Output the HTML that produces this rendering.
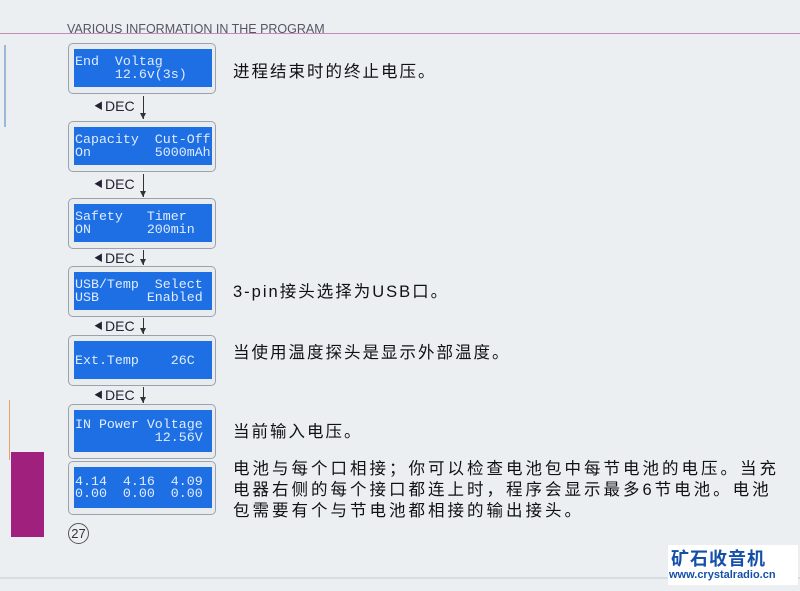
<!DOCTYPE html><html><head><meta charset="utf-8"><style>
body{margin:0;width:800px;height:591px;background:#eceff2;position:relative;overflow:hidden;font-family:"Liberation Sans","Noto Sans CJK SC",sans-serif}
.a{position:absolute}
.box{position:absolute;left:68px;width:146px;height:49px;border:1px solid #9aa3ad;border-radius:5px;background:#e8ecef}
.lcd{position:absolute;left:5px;top:5px;right:3px;bottom:6px;background:#1d6fe3;color:#e0ecff;font:13.3px/13px "Liberation Mono",monospace;padding:3px 1px;white-space:pre;overflow:hidden;box-sizing:border-box;display:flex;flex-direction:column;justify-content:center}
.dec{position:absolute;left:94px;font-size:14px;color:#223}
.dec:before{content:"◀";font-size:9px;margin-right:2px;vertical-align:2px}
.arr{position:absolute;left:143px;width:1px;background:#333}
.arr:after{content:"";position:absolute;left:-3px;bottom:0;border:3.5px solid transparent;border-top:6px solid #333;border-bottom:0}
.t{position:absolute;left:233px;font-size:16.5px;color:#111;line-height:21px;letter-spacing:2px}
</style></head><body>
<div class="a" style="left:0;top:33px;width:800px;height:1px;background:#c58ab8"></div>
<div class="a" style="left:67px;top:22px;font-size:12.5px;color:#556">VARIOUS INFORMATION IN THE PROGRAM</div>
<div class="a" style="left:4px;top:45px;width:2px;height:82px;background:#9ab8d8"></div>
<div class="a" style="left:9px;top:400px;width:1px;height:60px;background:#e8a070"></div>
<div class="a" style="left:11px;top:452px;width:33px;height:85px;background:#a0207e"></div>
<div class="a" style="left:0;top:577px;width:800px;height:2px;background:#d6dce2"></div>

<div class="box" style="top:43px"><div class="lcd">End  Voltag
     12.6v(3s)</div></div>
<div class="dec" style="top:98px">DEC</div><div class="arr" style="top:96px;height:23px"></div>
<div class="box" style="top:121px"><div class="lcd">Capacity  Cut-Off
On        5000mAh</div></div>
<div class="dec" style="top:176px">DEC</div><div class="arr" style="top:174px;height:23px"></div>
<div class="box" style="top:198px"><div class="lcd">Safety   Timer
ON       200min</div></div>
<div class="dec" style="top:250px">DEC</div><div class="arr" style="top:250px;height:15px"></div>
<div class="box" style="top:266px"><div class="lcd">USB/Temp  Select
USB      Enabled</div></div>
<div class="dec" style="top:318px">DEC</div><div class="arr" style="top:318px;height:16px"></div>
<div class="box" style="top:335px"><div class="lcd">Ext.Temp    26C</div></div>
<div class="dec" style="top:387px">DEC</div><div class="arr" style="top:387px;height:16px"></div>
<div class="box" style="top:404px;height:53px"><div class="lcd">IN Power Voltage
          12.56V</div></div>
<div class="box" style="top:461px;height:52px"><div class="lcd" style="line-height:12px">4.14  4.16  4.09
0.00  0.00  0.00</div></div>
<div class="a" style="left:68px;top:523px;width:19px;height:19px;border:1px solid #555;border-radius:50%;font-size:13px;text-align:center;line-height:19px;color:#333">27</div>

<div class="t" style="top:62px">进程结束时的终止电压。</div>
<div class="t" style="top:282px">3-pin接头选择为USB口。</div>
<div class="t" style="top:343px">当使用温度探头是显示外部温度。</div>
<div class="t" style="top:422px">当前输入电压。</div>
<div class="t" style="top:459px;letter-spacing:3px;white-space:nowrap">电池与每个口相接；你可以检查电池包中每节电池的电压。当充<br>电器右侧的每个接口都连上时，程序会显示最多6节电池。电池<br>包需要有个与节电池都相接的输出接头。</div>

<div class="a" style="left:668px;top:545px;width:130px;height:40px;background:#fff"></div>
<div class="a" style="left:671px;top:545px;font-size:18px;font-weight:bold;color:#1550a8;letter-spacing:1px">矿石收音机</div>
<div class="a" style="left:669px;top:569px;font-size:11px;font-weight:bold;color:#1550a8">www.crystalradio.cn</div>
</body></html>
